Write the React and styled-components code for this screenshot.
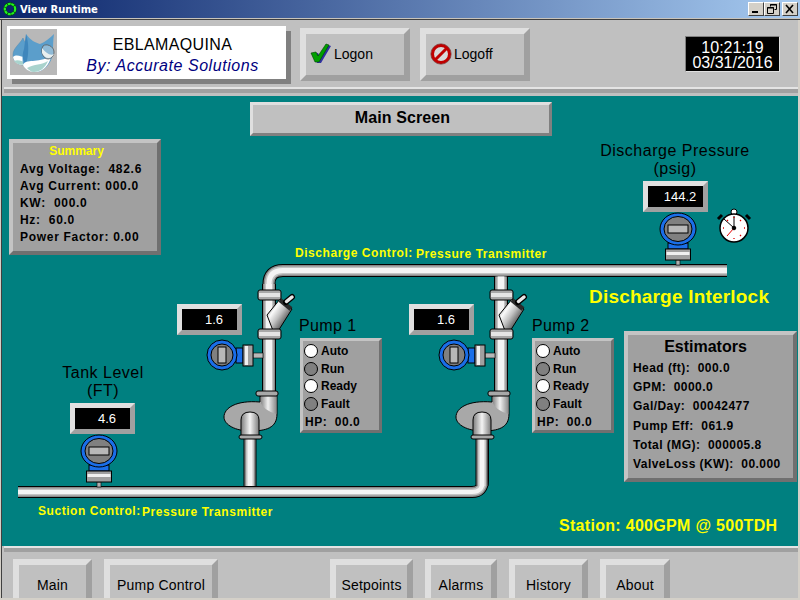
import React from 'react'
import styled, { createGlobalStyle, css } from 'styled-components'

const GlobalStyle = createGlobalStyle`
  html, body { margin: 0; padding: 0; background: #d4d0c8; }
  body { font-family: "Liberation Sans", Arial, sans-serif; color: #000; }
`

// canvas items are given in screen coordinates, canvas starts at 2,96
const at = css`
  position: absolute;
  left: ${p => p.$x - 2}px;
  top: ${p => p.$y - 96}px;
`

const BLUE = '#1a6ee8'
const PIPE_LAYERS = [['#000', 0], ['#8a8a8a', 2], ['#c4c4c4', 5], ['#f4f4f4', 8]]

const Pipe = ({ d, width }) => (
  <g fill='none'>
    {PIPE_LAYERS.map(([color, less]) => (
      <path key={color} d={d} stroke={color} strokeWidth={width - less} />
    ))}
  </g>
)

const Flange = ({ x, y, w = 23, h = 10 }) => (
  <g>
    <rect x={x} y={y} width={w} height={h} rx='2' fill='#a8a8a8' stroke='#000' />
    <rect x={x + 1} y={y + 3} width={w - 2} height={h - 6} fill='#e4e4e4' />
  </g>
)

const Transmitter = ({ cx, cy }) => (
  <g stroke='#000'>
    <rect x={cx - 2} y={cy + 31} width='4' height='5' fill='#b0b0b0' strokeWidth='.6' />
    <rect x={cx - 10} y={cy + 14} width='20' height='6' fill={BLUE} />
    <ellipse cx={cx} cy={cy} rx='18' ry='16' fill={BLUE} />
    <ellipse cx={cx} cy={cy} rx='14' ry='12.5' fill='#808080' />
    <rect x={cx - 10} y={cy - 4} width='20' height='8' fill='#b8b8b8' />
    <rect x={cx - 12.5} y={cy + 20} width='25' height='11' fill='#a0a0a0' />
    <rect x={cx - 11.5} y={cy + 23} width='23' height='3' fill='#f0f0f0' stroke='none' />
  </g>
)

const SideTransmitter = () => (
  <g stroke='#000'>
    <rect x='253' y='353' width='10' height='5' fill='#b8b8b8' strokeWidth='.6' />
    <rect x='236' y='348' width='7' height='15' fill={BLUE} />
    <circle cx='222' cy='355' r='15' fill={BLUE} />
    <circle cx='222' cy='355' r='11' fill='#808080' />
    <rect x='218' y='347' width='8' height='16' fill='#b8b8b8' />
    <rect x='243' y='345' width='10' height='21' fill='#a0a0a0' />
    <rect x='245' y='346' width='3' height='19' fill='#f0f0f0' stroke='none' />
  </g>
)

const PumpSet = ({ dx }) => (
  <g transform={`translate(${dx} 0)`}>
    <Pipe d='M250 438V486' width={13} />
    <Pipe d='M269 284V395' width={14} />
    <path d='M267 315L280 299L292 309L275 336Z' fill='url(#strainer)' stroke='#000' />
    <path d='M280 300L291 309' stroke='#2a2a2a' strokeWidth='4.5' />
    <path d='M286 302L292 297' stroke='#000' strokeWidth='6' strokeLinecap='round' />
    <path d='M286.5 301.5L292 297' stroke='#e8e8e8' strokeWidth='3.5' strokeLinecap='round' />
    <Flange x={258} y={290} />
    <Flange x={258} y={329} />
    <path
      d='M260 402C236 400 224 408 224 417C224 425 236 431 250 431C266 431 277 428 277 414V396H260Z'
      fill='#a8a8a8'
      stroke='#000'
    />
    <path d='M261 396V403Q263 410 276.5 414V396Z' fill='url(#elbow)' />
    <Flange x={256} y={391} w={22} h={5} />
    <path d='M241 436V420Q241 412 250 412Q259 412 259 420V436Z' fill='url(#inlet)' stroke='#000' />
    <Flange x={239} y={435} w={23} h={4} />
    <SideTransmitter />
  </g>
)

const Diagram = () => (
  <DiagramSvg viewBox='2 96 796 450'>
    <defs>
      <linearGradient id='strainer' gradientUnits='userSpaceOnUse' x1='270' y1='305' x2='287' y2='317'>
        <stop offset='0' stopColor='#999' />
        <stop offset='.3' stopColor='#fafafa' />
        <stop offset='.65' stopColor='#c0c0c0' />
        <stop offset='1' stopColor='#6c6c6c' />
      </linearGradient>
      <linearGradient id='inlet' x1='0' y1='0' x2='1' y2='0'>
        <stop offset='0' stopColor='#7c7c7c' />
        <stop offset='.5' stopColor='#f4f4f4' />
        <stop offset='1' stopColor='#7c7c7c' />
      </linearGradient>
      <linearGradient id='elbow' x1='0' y1='0' x2='1' y2='0'>
        <stop offset='0' stopColor='#8a8a8a' />
        <stop offset='.45' stopColor='#f0f0f0' />
        <stop offset='1' stopColor='#8a8a8a' />
      </linearGradient>
    </defs>
    <Pipe d='M18 492H472Q483 492 483 480V438' width={12} />
    <Pipe d='M727 270.5H283Q269 270.5 269 284V290' width={13} />
    <Pipe d='M501 276.5V300' width={14} />
    <PumpSet dx={0} />
    <PumpSet dx={232} />
    <Transmitter cx={678} cy={229} />
    <Transmitter cx={99} cy={451} />
    <g stroke='#000'>
      <path d='M722 215L718 219M746 215L750 219' stroke='#000' strokeWidth='3' />
      <circle cx='734' cy='212' r='3' fill='#fff' />
      <circle cx='734' cy='228' r='14' fill='#fff' strokeWidth='1.5' />
      <path d='M724 219L734 228V216' fill='none' strokeWidth='1' />
      <path d='M734 228L727 236' stroke='#e00000' fill='none' />
      <circle cx='734' cy='228' r='1.8' fill='#000' />
      <path d='M734 217v1M745 228h-1M734 239v-1M723 228h1M741 220l-1 1M741 236l-1-1M727 220l1 1' stroke='#e00000' strokeWidth='1.3' />
    </g>
  </DiagramSvg>
)

const Logo = () => (
  <LogoSvg viewBox='0 0 47 46'>
    <path d='M13 9C10 15 3 19 3 26C3 33 9 36 14 36C20 36 23 31 22 25C21 19 15 15 13 9Z' fill='#5b9ecb' stroke='#4c86ae' strokeWidth='.5' />
    <path d='M3 28C8 24 12 30 21 28C21 33 18 36 13 36C8 36 4 33 3 28Z' fill='#fff' />
    <path d='M4 32C9 30 12 33 17 34C14 37 7 36 4 32Z' fill='#a9d3cd' />
    <path d='M16 5C20 11 26 14 30 15C35 13 40 9 44 5C43 12 43 18 43 25C41 36 32 44 24 43C15 42 11 35 13 26C15 19 16 11 16 5Z' fill='#5b9ecb' />
    <path d='M16 5C19 14 19 26 16 35C12 31 12 26 14 20Z' fill='#3f86bc' />
    <path d='M13 36C16 29 27 35 41 27C40 36 32 44 24 43C19 43 15 40 13 36Z' fill='#fff' />
    <path d='M17 39C24 35 32 36 38 32C35 39 30 43 24 43C21 43 19 41 17 39Z' fill='#a9d3cd' />
    <path d='M33 17C36 14 44 17 44 23C44 27 41 30 38 30C33 30 30 22 33 17Z' fill='#8fbad6' stroke='#5a5a5a' strokeWidth='.8' />
    <path d='M32 19C36 24 40 27 44 25C41 31 35 30 32 24Z' fill='#e8efef' />
  </LogoSvg>
)

const CheckIcon = () => (
  <IconSvg viewBox='0 0 22 22'>
    <path d='M3 11L8 10L10 14L18 2L21 3L11 20L7 20Z' fill='#3030a0' />
    <path d='M1 10L6 9L8 13L16 1L19 2L9 19L5 19Z' fill='#00a000' stroke='#004000' strokeWidth='.6' />
  </IconSvg>
)

const StopIcon = () => (
  <IconSvg viewBox='0 0 22 22'>
    <circle cx='11' cy='11' r='8.5' fill='#d8d8d8' stroke='#c00000' strokeWidth='3' />
    <path d='M5 17L17 5' stroke='#c00000' strokeWidth='3' />
    <circle cx='11' cy='11' r='10.2' fill='none' stroke='#600000' strokeWidth='.5' />
  </IconSvg>
)

const App = () => {
  return (
    <Window>
      <GlobalStyle />
      <TitleBar>
        <RingSvg viewBox='0 0 14 14'>
          <circle cx='7' cy='7' r='5.2' fill='none' stroke='#004000' strokeWidth='3' />
          <circle cx='7' cy='7' r='5.2' fill='none' stroke='#20f020' strokeWidth='2.2' strokeDasharray='3 .6' />
        </RingSvg>
        <TitleText>View Runtime</TitleText>
        <WinButton>
          <svg width='12' height='10' viewBox='0 0 12 10'><rect x='2' y='7' width='6' height='2' fill='#000' /></svg>
        </WinButton>
        <WinButton>
          <svg width='12' height='10' viewBox='0 0 12 10'>
            <path d='M4.5 2.5V.5H10.5V5.5H8.5M1.5 3.5H7.5V9.5H1.5Z' fill='none' stroke='#000' />
            <path d='M4 1H11M1 4H8' stroke='#000' />
          </svg>
        </WinButton>
        <WinButton $gap>
          <svg width='12' height='10' viewBox='0 0 12 10'><path d='M2 1L9 9M9 1L2 9' stroke='#000' strokeWidth='1.6' /></svg>
        </WinButton>
      </TitleBar>

      <Body>
        <Header>
          <HeaderRow>
            <LogoPanel>
              <Logo />
              <Brand>
                <BrandName>EBLAMAQUINA</BrandName>
                <BrandBy>By: Accurate Solutions</BrandBy>
              </Brand>
            </LogoPanel>
            <SessionButton><CheckIcon />Logon</SessionButton>
            <SessionButton><StopIcon />Logoff</SessionButton>
            <Clock>
              <span>10:21:19</span>
              <span>03/31/2016</span>
            </Clock>
          </HeaderRow>
          <Groove $inset />
        </Header>

        <Canvas>
          <Diagram />
          <ScreenTitle $x={250} $y={102}>Main Screen</ScreenTitle>

          <Summary $x={9} $y={139}>
            <SummaryTitle>Summary</SummaryTitle>
            <ReadRow>Avg Voltage:  482.6</ReadRow>
            <ReadRow>Avg Current: 000.0</ReadRow>
            <ReadRow>KW:  000.0</ReadRow>
            <ReadRow>Hz:  60.0</ReadRow>
            <ReadRow>Power Factor: 0.00</ReadRow>
          </Summary>

          <GaugeLabel $x={600} $y={142} $w={150}>Discharge Pressure<br />(psig)</GaugeLabel>
          <Display $x={643} $y={181}><DisplayValue>144.2</DisplayValue></Display>

          <GaugeLabel $x={43} $y={364} $w={120}>Tank Level<br />(FT)</GaugeLabel>
          <Display $x={70} $y={403}><DisplayValue>4.6</DisplayValue></Display>

          <Display $x={177} $y={304}><DisplayValue>1.6</DisplayValue></Display>
          <Display $x={409} $y={304}><DisplayValue>1.6</DisplayValue></Display>

          <ControlLabel $x={295} $y={246}>Discharge Control:</ControlLabel>
          <ControlValue $x={416} $y={247}>Pressure Transmitter</ControlValue>
          <ControlLabel $x={38} $y={504}>Suction Control:</ControlLabel>
          <ControlValue $x={142} $y={505}>Pressure Transmitter</ControlValue>

          <Interlock $x={589} $y={287}>Discharge Interlock</Interlock>
          <Station $x={559} $y={517}>Station: 400GPM @ 500TDH</Station>

          <PumpName $x={299} $y={317}>Pump 1</PumpName>
          <PumpPanel $x={300} $y={338}>
            <LedRow><Led $on />Auto</LedRow>
            <LedRow><Led />Run</LedRow>
            <LedRow><Led $on />Ready</LedRow>
            <LedRow><Led />Fault</LedRow>
            <HpRow>HP:  00.0</HpRow>
          </PumpPanel>

          <PumpName $x={532} $y={317}>Pump 2</PumpName>
          <PumpPanel $x={532} $y={338}>
            <LedRow><Led $on />Auto</LedRow>
            <LedRow><Led />Run</LedRow>
            <LedRow><Led $on />Ready</LedRow>
            <LedRow><Led />Fault</LedRow>
            <HpRow>HP:  00.0</HpRow>
          </PumpPanel>

          <Estimators $x={624} $y={331}>
            <EstimatorsTitle>Estimators</EstimatorsTitle>
            <EstimatorRow>Head (ft):  000.0</EstimatorRow>
            <EstimatorRow>GPM:  0000.0</EstimatorRow>
            <EstimatorRow>Gal/Day:  00042477</EstimatorRow>
            <EstimatorRow>Pump Eff:  061.9</EstimatorRow>
            <EstimatorRow>Total (MG):  000005.8</EstimatorRow>
            <EstimatorRow>ValveLoss (KW):  00.000</EstimatorRow>
          </Estimators>
        </Canvas>

        <Footer>
          <Groove />
          <NavRow>
            <NavButton $w={79}>Main</NavButton>
            <NavButton $w={114} $after={100}>Pump Control</NavButton>
            <NavButton $w={83}>Setpoints</NavButton>
            <NavButton $w={72}>Alarms</NavButton>
            <NavButton $w={79}>History</NavButton>
            <NavButton $w={70}>About</NavButton>
          </NavRow>
        </Footer>
      </Body>
    </Window>
  )
}

export default App

const Window = styled.div`
  width: 800px;
  height: 600px;
  overflow: hidden;
  display: flex;
  flex-direction: column;
`

const TitleBar = styled.div`
  height: 18px;
  flex: none;
  display: flex;
  align-items: center;
  padding-right: 2px;
  background: linear-gradient(90deg, #0a246a, #a6caf0);
  border-bottom: 1px solid #c8c4bc;
  box-shadow: 0 1px 0 #404040;
  position: relative;
  z-index: 1;
`

const RingSvg = styled.svg`
  width: 14px;
  height: 14px;
  margin-left: 3px;
`

const TitleText = styled.div`
  margin-left: 3px;
  flex: 1;
  color: #fff;
  font: bold 10px "DejaVu Sans", sans-serif;
`

const WinButton = styled.div`
  width: 16px;
  height: 14px;
  box-sizing: border-box;
  display: flex;
  align-items: center;
  justify-content: center;
  margin-left: ${p => (p.$gap ? 2 : 0)}px;
  background: #d4d0c8;
  border: 1px solid;
  border-color: #fff #404040 #404040 #fff;
`

const Body = styled.div`
  flex: 1;
  display: flex;
  flex-direction: column;
  margin-top: 1px;
  border-left: 1px solid #d4d0c8;
  border-right: 2px solid #d4d0c8;
  border-bottom: 2px solid #d4d0c8;
  box-shadow: inset 1px 0 0 #404040;
  padding-left: 1px;
`

const Header = styled.div`
  height: 76px;
  flex: none;
  background: #c0c0c0;
`

const HeaderRow = styled.div`
  height: 67px;
  box-sizing: border-box;
  display: flex;
  align-items: flex-start;
  padding: 6px 0 0 5px;
  gap: 10px;
`

const LogoPanel = styled.div`
  width: 279px;
  height: 53px;
  box-sizing: border-box;
  padding: 3px;
  margin-right: 4px;
  display: flex;
  background: #fff;
  box-shadow: 5px 5px 0 #808080;
`

const LogoSvg = styled.svg`
  width: 47px;
  height: 46px;
  flex: none;
  background: #b8b8b8;
`

const Brand = styled.div`
  flex: 1;
  padding: 4px 0 0 5px;
  display: flex;
  flex-direction: column;
  align-items: center;
  justify-content: center;
  gap: 2px;
  font-size: 16px;
  line-height: 19px;
`

const BrandName = styled.div`
  color: #000;
  letter-spacing: 0.35px;
`

const BrandBy = styled.div`
  color: #000080;
  font-style: italic;
  letter-spacing: 0.55px;
`

const SessionButton = styled.div`
  width: 110px;
  height: 53px;
  margin-top: 2px;
  box-sizing: border-box;
  display: flex;
  align-items: center;
  gap: 2px;
  padding: 0 0 2px 4px;
  font-size: 14px;
  background: #c0c0c0;
  border: 6px solid;
  border-color: #dfdfdf #a0a0a0 #a0a0a0 #dfdfdf;
`

const IconSvg = styled.svg`
  width: 22px;
  height: 22px;
`

const Clock = styled.div`
  width: 95px;
  height: 36px;
  margin: 10px 0 0 145px;
  padding-top: 1px;
  box-sizing: border-box;
  display: flex;
  flex-direction: column;
  align-items: center;
  justify-content: center;
  background: #000;
  color: #fff;
  font-size: 16px;
  line-height: 15px;
  border: 1px solid;
  border-color: #808080 #dfdfdf #dfdfdf #808080;
`

const Groove = styled.div`
  height: 4px;
  margin: ${p => (p.$inset ? '0 0 3px 2px' : '0 0 0 2px')};
  background: #a0a0a0;
  border-top: 2px solid #e4e4e4;
`

const Canvas = styled.div`
  position: relative;
  width: 796px;
  height: 450px;
  flex: none;
  background: #008080;
`

const DiagramSvg = styled.svg`
  position: absolute;
  left: 0;
  top: 0;
  width: 796px;
  height: 450px;
`

const ScreenTitle = styled.div`
  ${at}
  width: 302px;
  height: 34px;
  box-sizing: border-box;
  padding: 0 0 2px 3px;
  display: flex;
  align-items: center;
  justify-content: center;
  font-size: 16px;
  font-weight: bold;
  letter-spacing: 0.1px;
  background: #c0c0c0;
  border: 3px solid;
  border-color: #dfdfdf #808080 #808080 #dfdfdf;
`

const bevelPanel = css`
  box-sizing: border-box;
  background: #a0a0a0;
  border: 4px solid;
  border-color: #c4c4c4 #707070 #707070 #c4c4c4;
  font-size: 12px;
  font-weight: bold;
  white-space: pre;
`

const Summary = styled.div`
  ${at}
  ${bevelPanel}
  width: 152px;
  height: 116px;
  padding: 1px 0 0 7px;
`

const SummaryTitle = styled.div`
  color: #ffff00;
  text-align: center;
  line-height: 15px;
  padding-right: 24px;
  margin-bottom: 2px;
`

const ReadRow = styled.div`
  height: 17px;
  line-height: 17px;
  letter-spacing: 0.7px;
`

const GaugeLabel = styled.div`
  ${at}
  width: ${p => p.$w}px;
  font-size: 16px;
  line-height: 18px;
  text-align: center;
  letter-spacing: 0.5px;
  white-space: nowrap;
`

const Display = styled.div`
  ${at}
  width: 65px;
  height: 31px;
  box-sizing: border-box;
  background: #000;
  display: flex;
  align-items: center;
  justify-content: center;
  padding-left: 9px;
  border: 5px solid;
  border-color: #e0e0e0 #a0a0a0 #a0a0a0 #e0e0e0;
`

const DisplayValue = styled.span`
  color: #fff;
  font-size: 13px;
`

const ControlLabel = styled.div`
  ${at}
  color: #ffff00;
  font-size: 12px;
  font-weight: bold;
  line-height: 14px;
  letter-spacing: 0.55px;
  white-space: nowrap;
`

const Interlock = styled.div`
  ${at}
  color: #ffff00;
  font-size: 19px;
  font-weight: bold;
  line-height: 20px;
  letter-spacing: 0.2px;
  white-space: nowrap;
`

const Station = styled.div`
  ${at}
  color: #ffff00;
  font-size: 16px;
  font-weight: bold;
  line-height: 18px;
  letter-spacing: 0.3px;
  white-space: nowrap;
`

const ControlValue = styled(ControlLabel)``

const PumpName = styled.div`
  ${at}
  font-size: 16px;
  line-height: 18px;
  letter-spacing: 0.4px;
  white-space: nowrap;
`

const PumpPanel = styled.div`
  ${at}
  ${bevelPanel}
  width: 82px;
  height: 95px;
  padding: 1.5px 0 0 1px;
  border-width: 3px;
`

const LedRow = styled.div`
  display: flex;
  align-items: center;
  gap: 3px;
  height: 17.5px;
`

const Led = styled.span`
  width: 14px;
  height: 14px;
  box-sizing: border-box;
  border-radius: 50%;
  border: 1px solid #000;
  background: ${p => (p.$on ? '#fff' : '#808080')};
`

const HpRow = styled.div`
  padding-left: 1px;
  height: 18px;
  line-height: 18px;
  letter-spacing: 0.5px;
`

const Estimators = styled.div`
  ${at}
  ${bevelPanel}
  width: 173px;
  height: 151px;
  padding: 3px 0 0 5px;
`

const EstimatorsTitle = styled.div`
  font-size: 16px;
  line-height: 18px;
  text-align: center;
  padding-right: 15px;
  margin-bottom: 3px;
`

const EstimatorRow = styled.div`
  height: 19.2px;
  line-height: 19.2px;
  letter-spacing: 0.45px;
`

const Footer = styled.div`
  height: 52px;
  flex: none;
  overflow: hidden;
  background: #c0c0c0;
`

const NavRow = styled.div`
  display: flex;
  gap: 12px;
  padding: 7px 0 0 11px;
`

const NavButton = styled.div`
  width: ${p => p.$w}px;
  height: 46px;
  flex: none;
  box-sizing: border-box;
  margin-right: ${p => p.$after || 0}px;
  text-align: center;
  font-size: 14px;
  line-height: 41px;
  letter-spacing: 0.2px;
  background: #c0c0c0;
  border: 6px solid;
  border-color: #dfdfdf #a0a0a0 #a0a0a0 #dfdfdf;
`
